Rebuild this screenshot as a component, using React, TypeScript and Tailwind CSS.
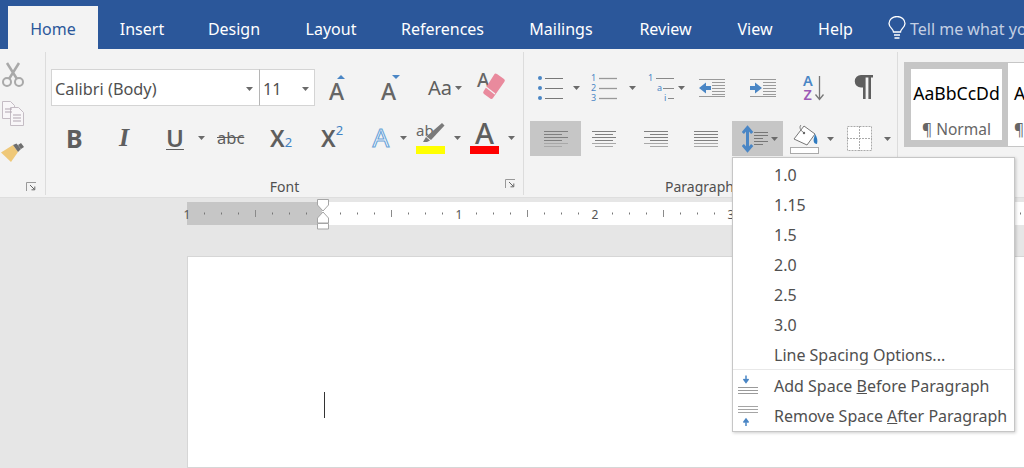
import React from "react";

const G = "#666666";
const B = "#4a86c5";
const F = { fontFamily: "'Noto Sans', 'Open Sans', sans-serif" };

const Caret = ({ className = "" }: { className?: string }) => (
  <svg width="7" height="4" viewBox="0 0 7 4" className={className}><path d="M0 0h7L3.500 4z" fill="#6a6a6a" /></svg>
);

const Tab = ({ children, active, w }: { children: string; active?: boolean; w: string }) => (
  <div className={`${w} ${active ? "bg-[#f3f3f3] text-[#2b579a]" : "text-white"} shrink-0 h-[43px] pt-[2px] flex items-center justify-center text-[16px]`}>{children}</div>
);

const Launcher = () => (
  <svg width="11" height="10" viewBox="0 0 11 10">
    <path d="M.5 9V.5H10" fill="none" stroke="#999" />
    <path d="M4 3l4.500 4.500M8.800 4.500v3.300H5.500" fill="none" stroke="#666" />
  </svg>
);

const Align = ({ kind }: { kind: "l" | "c" | "r" | "j" }) => {
  const ys = [1, 4, 7, 10, 13, 16];
  const short = [24, 18, 24, 18, 24, 18];
  return (
    <svg width="24" height="18" viewBox="0 0 24 18">
      {ys.map((y, i) => {
        const w = kind === "j" ? 24 : short[i];
        const x = kind === "l" || kind === "j" ? 0 : kind === "c" ? (24 - w) / 2 : 24 - w;
        return <path key={y} d={`M${x} ${y + 0.5}h${w}`} stroke={i > 3 ? "#a8a8a8" : "#808080"} />;
      })}
    </svg>
  );
};

const Scissors = () => (
  <svg width="24" height="26" viewBox="0 0 24 26" fill="none" stroke="#a9a9a9" strokeWidth="2">
    <circle cx="6" cy="20" r="4" />
    <circle cx="18" cy="20" r="4" />
    <path d="M8 17L18 1M16 17L6 1" strokeWidth="2.500" />
  </svg>
);
const CopyIcon = () => (
  <svg width="24" height="27" viewBox="0 0 24 27" fill="#f8f6f8" stroke="#c4bcc4">
    <path d="M1.500 1.500h8l4 4v13h-12z" />
    <path d="M9.500 7.500h8l5 5v13h-13z" />
    <path d="M4 9h7M4 12h7M12 15h8M12 18h8M12 21h8" stroke="#b0a5b0" />
  </svg>
);
const Painter = () => (
  <svg width="24" height="21" viewBox="0 0 24 21">
    <path d="M0 9.500L12 2l5 7-7 10z" fill="#efc878" />
    <path d="M12 2l5 7 3-3-4.500-5.500z" fill="#6e6e6e" />
    <path d="M17 2l3-2 3 4-3 2z" fill="#6e6e6e" />
  </svg>
);

const GrowA = ({ down }: { down?: boolean }) => (
  <svg width="22" height="28" viewBox="0 0 22 28" className="overflow-visible">
    <text x="0" y="26" fontSize="23" fontWeight="500" fill={G} fontFamily="'Noto Sans', sans-serif">A</text>
    <path d={down ? "M11 1h8l-4 4z" : "M8 5h8l-4-4z"} fill={B} />
  </svg>
);

const Eraser = () => (
  <svg width="30" height="30" viewBox="0 0 30 30" className="overflow-visible">
    <text x="0" y="16" fontSize="19" fontWeight="500" fill={G} fontFamily="'Noto Sans', sans-serif">A</text>
    <path d="M20 3l7 5a2 2 0 0 1 .4 2.800L16 27a2 2 0 0 1-2.800.4L7 23a2 2 0 0 1-.4-2.800L17.200 3.400A2 2 0 0 1 20 3z" fill="#e98a9d" />
    <path d="M9 16l9 7" stroke="#f3f3f3" strokeWidth="1.200" />
  </svg>
);

const Bullets = () => (
  <svg width="27" height="26" viewBox="0 0 27 26">
    {[3, 13, 23].map((y) => (
      <g key={y}>
        <circle cx="2" cy={y} r="2" fill={B} />
        <path d={`M7 ${y + 0.5}h18`} stroke="#777" />
      </g>
    ))}
  </svg>
);
const Numbering = () => (
  <svg width="27" height="30" viewBox="0 0 27 30" className="overflow-visible">
    {[["1", 9], ["2", 19], ["3", 29]].map(([t, y]) => (
      <g key={t as string}>
        <text x="0" y={(y as number) - 1} fontSize="9" fill={B} fontFamily="'Noto Sans', sans-serif">{t}</text>
        <path d={`M8 ${(y as number) - 3.5}h18`} stroke="#999" strokeWidth="1.300" />
      </g>
    ))}
  </svg>
);
const Multi = () => (
  <svg width="29" height="30" viewBox="0 0 29 30" className="overflow-visible">
    <text x="0" y="8" fontSize="9" fill={B} fontFamily="'Noto Sans', sans-serif">1</text>
    <path d="M8 5.500h18" stroke="#888" />
    <text x="9" y="18" fontSize="9" fill={B} fontFamily="'Noto Sans', sans-serif">a</text>
    <path d="M15 15.500h11" stroke="#888" />
    <text x="16" y="28" fontSize="9" fill={B} fontFamily="'Noto Sans', sans-serif">i</text>
    <path d="M20 25.500h6" stroke="#888" />
  </svg>
);
const Indent = ({ inc }: { inc?: boolean }) => (
  <svg width="26" height="20" viewBox="0 0 26 20">
    <path d="M0 1.500h26M13 4.500h13M13 7.500h13M13 10.500h13M13 13.500h13M13 16.500h13M0 18.500h26" stroke="#9a9a9a" fill="none" />
    {inc ? (
      <path d="M0 8h5V4.500L12 10l-7 5.500V12H0z" fill={B} />
    ) : (
      <path d="M12 8H7V4.500L0 10l7 5.500V12h5z" fill={B} />
    )}
  </svg>
);
const Sort = () => (
  <svg width="22" height="26" viewBox="0 0 22 26" className="overflow-visible">
    <text x="0" y="11" fontSize="14.500" fontWeight="600" fill={B} fontFamily="'Noto Sans', sans-serif">A</text>
    <text x="0.500" y="25" fontSize="14.500" fontWeight="600" fill="#9b59b6" fontFamily="'Noto Sans', sans-serif">Z</text>
    <path d="M16.500 1v23M12.500 19.500l4 5 4-5" stroke="#777" strokeWidth="1.300" fill="none" />
  </svg>
);
const Pilcrow = () => (
  <svg width="19" height="24" viewBox="0 0 19 24">
    <path d="M7 0h12v2.500h-2V24h-2.600V2.500h-2.800V24H9V12.500H7A6.200 6.200 0 0 1 7 0z" fill="#5e5e5e" />
  </svg>
);

const TextEffect = () => (
  <svg width="20" height="24" viewBox="0 0 20 24" className="overflow-visible">
    <text x="-0.500" y="21" fontSize="26" fill="#fff" stroke="#6aa3d8" strokeWidth="1.100" fontFamily="'Noto Sans', sans-serif">A</text>
  </svg>
);
const Highlight = () => (
  <div className="flex flex-col w-[29px] h-[36px] items-start">
    <svg width="29" height="26" viewBox="0 0 29 26" className="overflow-visible">
      <text x="0" y="16" fontSize="15" fill={G} fontFamily="'Noto Sans', sans-serif">ab</text>
      <path d="M26 3l2.500 2.500L15 20l-4.500-3.500z" fill="#7a7a7a" />
      <path d="M10 17l4 3.500-3 1.500H7z" fill="#7a7a7a" />
    </svg>
    <div className="w-[29px] h-[8px] bg-[#ffff00]" />
  </div>
);
const FontColor = () => (
  <div className="flex flex-col w-[29px] h-[36px] items-center">
    <span className="text-[29px] font-medium leading-[26px] h-[26px] text-[#5e5e5e]">A</span>
    <div className="w-[29px] h-[8px] bg-[#ff0000]" />
  </div>
);
const LineSpacingIcon = () => (
  <svg width="27" height="28" viewBox="0 0 27 28">
    <path d="M5.500 3v22" stroke={B} strokeWidth="3" />
    <path d="M.8 8l4.700-5.500L10.200 8M.8 20l4.700 5.500L10.200 20" stroke={B} strokeWidth="3" fill="none" />
    <path d="M12 7.500h14M12 10.500h14M12 13.500h9M12 16.500h14M12 19.500h9" stroke="#777" fill="none" />
  </svg>
);
const Shading = () => (
  <div className="flex flex-col w-[29px] h-[29px] items-start">
    <svg width="29" height="22" viewBox="0 0 29 22">
      <path d="M14 1l11 8-8 11L4 14z" fill="#fff" stroke="#777" />
      <path d="M11 0c-2 2-1 5 3 8" fill="none" stroke="#777" />
      <circle cx="14" cy="8" r="1.200" fill="#666" />
      <path d="M25 9c2 3 3 6 2 10-3 0-4-3-3-6z" fill="#2f7bc0" />
    </svg>
    <div className="w-[29px] h-[7px] bg-white border border-[#aaaaaa]" />
  </div>
);
const BordersIcon = () => (
  <svg width="25" height="25" viewBox="0 0 25 25">
    <rect x="0.500" y="0.500" width="24" height="24" fill="#fff" stroke="#aaa" strokeDasharray="2 1" />
    <path d="M12.500 0v25M0 12.500h25" stroke="#aaa" strokeDasharray="2 1" />
  </svg>
);

const Group = ({ children, w, label }: { children: React.ReactNode; w: string; label: React.ReactNode }) => (
  <div className={`${w} shrink-0 h-[143px] my-[3px] border-r border-[#dcdcdc] flex flex-col relative`}>
    {children}
    {label}
  </div>
);

const Item = ({ children, icon, className = "" }: { children: React.ReactNode; icon?: React.ReactNode; className?: string }) => (
  <div className={`h-[30px] flex items-center text-[16px] text-[#505050] ${className}`}>
    <div className="w-[41px] flex pl-[5px] shrink-0">{icon}</div>
    <div className="whitespace-nowrap">{children}</div>
  </div>
);

const AddBefore = () => (
  <svg width="20" height="24" viewBox="0 0 20 24">
    <path d="M8 1.500v5.500M5.500 5l2.500 3.500L10.500 5" fill={B} stroke={B} strokeWidth="1.500" />
    <path d="M0 13.500h20M0 16.500h20M0 19.500h20" stroke="#9a9a9a" />
  </svg>
);
const RemoveAfter = () => (
  <svg width="20" height="24" viewBox="0 0 20 24">
    <path d="M0 2.500h20M0 5.500h20M0 8.500h20" stroke="#a5a5a5" />
    <path d="M8 22v-6M5.500 18.500L8 15l2.500 3.500" fill={B} stroke={B} strokeWidth="1.500" />
  </svg>
);

const Ruler = () => {
  const ticks: React.ReactNode[] = [];
  for (let i = -7; i <= 41; i++) {
    const x = 136 + i * 17;
    if (i % 8 === 0) continue;
    if (i % 4 === 0) ticks.push(<path key={i} d={`M${x + 0.5} 8v7`} stroke="#8a8a8a" />);
    else ticks.push(<path key={i} d={`M${x + 0.5} 10.500v2`} stroke="#777" />);
  }
  return (
    <svg width="837" height="23" viewBox="0 0 837 23" className="absolute left-0 top-0 overflow-visible">
      {ticks}
      {[[0, "1"], [272, "1"], [408, "2"], [544, "3"]].map(([x, t]) => (
        <text key={x as number} x={x as number} y="17" fontSize="12" fill="#555" textAnchor="middle" fontFamily="'Noto Sans', sans-serif">{t}</text>
      ))}
    </svg>
  );
};

const Marker = () => (
  <svg width="14" height="33" viewBox="0 0 14 33" className="absolute left-[129px] top-[-3px]">
    <path d="M1.500 .5h11v5.500L7 12 1.500 6z" fill="#fff" stroke="#a5a5a5" />
    <path d="M7 13l5.500 6v5h-11v-5z" fill="#fff" stroke="#a5a5a5" />
    <path d="M1.500 24.500h11v5.500h-11z" fill="#fff" stroke="#a5a5a5" />
  </svg>
);

export default function App() {
  return (
    <div className="relative w-[1024px] h-[468px] overflow-hidden bg-[#e6e6e6] flex flex-col" style={F}>
      <div className="h-[49px] bg-[#2b579a] flex items-end pl-[8px] shrink-0 overflow-hidden">
        <Tab active w="w-[90px]">Home</Tab>
        <Tab w="w-[88px]">Insert</Tab>
        <Tab w="w-[96px]">Design</Tab>
        <Tab w="w-[98px]">Layout</Tab>
        <Tab w="w-[125px]">References</Tab>
        <Tab w="w-[112px]">Mailings</Tab>
        <Tab w="w-[97px]">Review</Tab>
        <Tab w="w-[82px]">View</Tab>
        <Tab w="w-[79px]">Help</Tab>
        <div className="h-[43px] shrink-0 flex items-center pl-[13px] text-[16px] text-[#c3cfe3] whitespace-nowrap">
          <svg width="18" height="24" viewBox="0 0 18 24" fill="none" stroke="#fff" strokeWidth="1.300" className="mr-[4px]">
            <path d="M5.500 16c0-3-4.500-4.500-4.500-8.500a8 7 0 0 1 16 0c0 4-4.500 5.500-4.500 8.500z" />
            <path d="M6 19h6M6.500 22h5" />
          </svg>
          <span className="pt-[2px]">Tell me what you want to do</span>
        </div>
      </div>

      <div className="h-[149px] bg-[#f3f3f3] border-b border-[#dedede] flex shrink-0">
        <Group w="w-[46px]" label={<div className="absolute left-[26px] top-[130px]"><Launcher /></div>}>
          <div className="flex flex-col pl-[1px] pt-[10px]">
            <Scissors />
            <div className="mt-[12px]"><CopyIcon /></div>
            <div className="mt-[16px]"><Painter /></div>
          </div>
        </Group>

        <Group w="w-[478px]" label={
          <div className="mt-auto h-[18px] flex items-center justify-center text-[14px] text-[#505050] relative">
            Font
            <div className="absolute right-[7px] top-[2px]"><Launcher /></div>
          </div>}>
          <div className="flex items-center pl-[5px] pt-[17px]">
            <div className="w-[209px] h-[37px] bg-white border border-[#d4d4d4] flex items-center justify-between pl-[3px] pr-[6px] pt-[3px] text-[16.300px] text-[#505050]">
              Calibri (Body)<Caret />
            </div>
            <div className="w-[56px] h-[37px] bg-white border border-[#d4d4d4] border-l-[#b5b5b5] -ml-px flex items-center justify-between pl-[3px] pr-[5px] pt-[3px] text-[16.300px] text-[#505050]">
              11<Caret />
            </div>
            <div className="ml-[14px]"><GrowA /></div>
            <div className="ml-[30px]"><GrowA down /></div>
            <span className="ml-[25px] text-[20px] leading-none text-[#5e5e5e]">Aa</span>
            <Caret className="ml-[3px]" />
            <div className="ml-[15px] -mt-[3px]"><Eraser /></div>
          </div>
          <div className="flex items-center h-[36px] mt-[14px] pl-[20px] text-[#5e5e5e]">
            <span className="w-[16px] font-bold text-[25px] leading-none">B</span>
            <span className="ml-[37px] w-[14px] italic font-bold text-[26px] leading-none" style={{ fontFamily: "'Liberation Serif', serif" }}>I</span>
            <span className="ml-[33px] w-[16px] text-[24px] leading-none font-semibold underline decoration-1 underline-offset-2">U</span>
            <Caret className="ml-[16px]" />
            <span className="ml-[12px] w-[28px] text-[16.500px] leading-none line-through">abc</span>
            <span className="ml-[25px] w-[24px] flex items-baseline font-semibold text-[23px] leading-none">X<span className="text-[13px] text-[#3f82c4] font-normal">2</span></span>
            <span className="ml-[27px] w-[26px] flex font-semibold text-[23px] leading-none">X<span className="text-[13px] text-[#3f82c4] font-normal -mt-[3px]">2</span></span>
            <div className="ml-[26px]"><TextEffect /></div>
            <Caret className="ml-[7px]" />
            <div className="ml-[9px]"><Highlight /></div>
            <Caret className="ml-[9px]" />
            <div className="ml-[9px]"><FontColor /></div>
            <Caret className="ml-[9px]" />
          </div>
        </Group>

        <Group w="w-[374px]" label={
          <div className="mt-auto h-[18px] flex items-center pl-[141px] text-[14px] text-[#505050]">Paragraph</div>}>
          <div className="flex items-center h-[37px] mt-[17px] pl-[14px]">
            <Bullets />
            <Caret className="ml-[8px]" />
            <div className="ml-[11px]"><Numbering /></div>
            <Caret className="ml-[11px]" />
            <div className="ml-[12px]"><Multi /></div>
            <Caret className="ml-[1px]" />
            <div className="ml-[14px]"><Indent /></div>
            <div className="ml-[25px]"><Indent inc /></div>
            <div className="ml-[27px]"><Sort /></div>
            <div className="ml-[29px] -mt-[2px]"><Pilcrow /></div>
          </div>
          <div className="flex items-center h-[35px] mt-[15px] pl-[6px]">
            <div className="w-[51px] h-[35px] bg-[#c6c6c6] flex items-center justify-center"><Align kind="l" /></div>
            <div className="ml-[11px]"><Align kind="c" /></div>
            <div className="ml-[28px]"><Align kind="r" /></div>
            <div className="ml-[26px]"><Align kind="j" /></div>
            <div className="ml-[14px] w-[51px] h-[35px] bg-[#c6c6c6] flex items-center pl-[10px]">
              <LineSpacingIcon />
              <Caret className="ml-[2px]" />
            </div>
            <div className="ml-[7px] mt-[2px]"><Shading /></div>
            <Caret className="ml-[8px]" />
            <div className="ml-[13px]"><BordersIcon /></div>
            <Caret className="ml-[12px]" />
          </div>
        </Group>

        <div className="flex-1 pl-[6px] pt-[13px] min-w-0">
          <div className="h-[85px] border border-r-0 border-[#c6c6c6] bg-white flex overflow-hidden">
            <div className="w-[103px] h-[83px] shrink-0 border-[6px] border-[#c6c6c6] flex flex-col items-center">
              <span className="mt-[12px] text-[17.600px] leading-[24px] text-black whitespace-nowrap">AaBbCcDd</span>
              <span className="mt-[14px] text-[15.500px] leading-[20px] text-[#666] whitespace-nowrap">¶ Normal</span>
            </div>
            <div className="flex flex-col pl-[6px]">
              <span className="mt-[18px] text-[17.600px] leading-[24px] text-black">A</span>
              <span className="mt-[14px] text-[15.500px] leading-[20px] text-[#666]">¶</span>
            </div>
          </div>
        </div>
      </div>

      <div className="relative ml-[187px] mt-[4px] h-[23px] flex shrink-0">
        <div className="w-[135px] bg-[#c6c6c6]" />
        <div className="flex-1 bg-white" />
        <Ruler />
        <Marker />
      </div>

      <div className="ml-[187px] mt-[31px] flex-1 bg-white border border-[#d6d6d6] border-r-0 pl-[136px] pt-[135px]">
        <div className="w-px h-[26px] bg-[#333]" />
      </div>

      <div className="absolute left-[732px] top-[157px] w-[283px] h-[275px] bg-white border border-[#c6c6c6] shadow-[1px_1px_3px_rgba(0,0,0,0.2)] py-[2px]">
        <Item>1.0</Item>
        <Item>1.15</Item>
        <Item>1.5</Item>
        <Item>2.0</Item>
        <Item>2.5</Item>
        <Item>3.0</Item>
        <Item>Line Spacing Options...</Item>
        <div className="h-px bg-[#e8e8e8] -mt-px" />
        <Item icon={<AddBefore />} className="mt-px">Add Space <u>B</u>efore Paragraph</Item>
        <Item icon={<RemoveAfter />}>Remove Space <u>A</u>fter Paragraph</Item>
      </div>
    </div>
  );
}
